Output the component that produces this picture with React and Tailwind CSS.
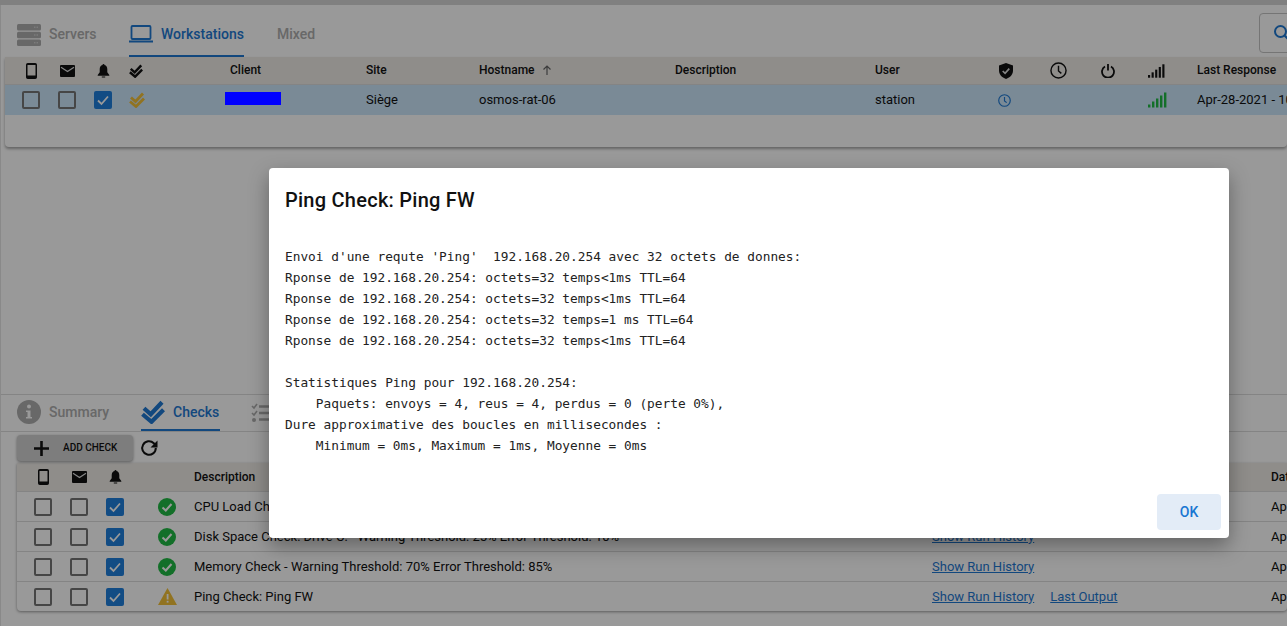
import React from "react";

function Phone() {
  return (
    <svg width="11" height="16" viewBox="0 0 11 16" className="block">
      <path fill="#111" d="M1.800 0h7.400A1.800 1.800 0 0 1 11 1.800v12.400A1.800 1.800 0 0 1 9.200 16H1.800A1.800 1.800 0 0 1 0 14.200V1.800A1.800 1.800 0 0 1 1.800 0zm-.3 2v10.500h8V2z" />
    </svg>
  );
}
function Mail() {
  return (
    <svg width="15" height="12" viewBox="0 0 15 12" className="block">
      <rect width="15" height="12" rx="1" fill="#111" />
      <path d="M1 2.200 7.500 6.500 14 2.200" fill="none" stroke="#ddd" strokeWidth="1.300" />
    </svg>
  );
}
function Bell() {
  return (
    <svg width="13" height="14" viewBox="0 0 13 14" className="block">
      <path fill="#111" d="M6.500 0a1 1 0 0 1 1 1.100C9.400 1.600 10.300 3.400 10.300 5.300v3L12.300 11v.7H.7V11l2-2.700v-3c0-1.900.9-3.700 2.800-4.200A1 1 0 0 1 6.500 0zM4.800 12.500h3.400v1H4.800z" />
    </svg>
  );
}
function Checks({ color = "#111", w = 14, h = 14 }) {
  return (
    <svg width={w} height={h} viewBox="0 0 16 16" className="block">
      <path d="M2 5.500 6.500 9.500 14 1.500" fill="none" stroke={color} strokeWidth="2.800" />
      <path d="M1 9.500 7 14.500 15 6.500" fill="none" stroke={color} strokeWidth="2.800" />
    </svg>
  );
}
function Shield() {
  return (
    <svg width="14" height="16" viewBox="0 0 15 17" className="block">
      <path fill="#111" d="M7.500 0 15 2.500v5.500c0 4.200-3 7.500-7.500 9C3 15.500 0 12.200 0 8V2.500z" />
      <path d="M4 8.500 6.500 11 11 6" fill="none" stroke="#ddd" strokeWidth="1.800" />
    </svg>
  );
}
function Clock({ size = 17, color = "#111", sw = 1.500 }) {
  return (
    <svg width={size} height={size} viewBox="0 0 18 18" className="block">
      <circle cx="9" cy="9" r="8" fill="none" stroke={color} strokeWidth={sw} />
      <path d="M9 4v5.500l3 2.500" fill="none" stroke={color} strokeWidth={sw} />
    </svg>
  );
}
function Power() {
  return (
    <svg width="14" height="14" viewBox="0 0 14 14" className="block">
      <path d="M4 2.500a6 6 0 1 0 6 0" fill="none" stroke="#111" strokeWidth="1.800" />
      <path d="M7 0v6.500" fill="none" stroke="#111" strokeWidth="1.800" />
    </svg>
  );
}
function Signal({ color = "#111", w = 17, h = 14 }) {
  const bars = [3, 6, 9, 12, 15];
  return (
    <svg width={w} height={h} viewBox="0 0 19 15" className="block">
      {bars.map((b, i) => (
        <rect key={i} x={i * 4} y={15 - b} width="2.400" height={b} fill={color} />
      ))}
    </svg>
  );
}
function Box({ on }) {
  return on ? (
    <span className="flex h-[18px] w-[18px] items-center justify-center rounded-[2px] bg-[#1e7fdc]">
      <svg width="14" height="14" viewBox="0 0 14 14"><path d="M2 7.500 5.500 11 12 3.500" fill="none" stroke="#fff" strokeWidth="1.800" /></svg>
    </span>
  ) : (
    <span className="block h-[18px] w-[18px] rounded-[2px] border-2 border-[#757575]" />
  );
}
function Cell({ children, className = "" }) {
  return <div className={`flex h-full min-w-0 items-center whitespace-nowrap ${className}`}>{children}</div>;
}

const top = "grid-cols-[36px_36px_36px_109px_136px_113px_196px_200px_113px_36px_68px_32px_64px_9px_100px]";

const ROWS = [
  ["ok", "CPU Load Check", false],
  ["ok", "Disk Space Check: Drive C: - Warning Threshold: 25% Error Threshold: 10%", false],
  ["ok", "Memory Check - Warning Threshold: 70% Error Threshold: 85%", false],
  ["warn", "Ping Check: Ping FW", true],
];

const OUTPUT = `Envoi d'une requte 'Ping'  192.168.20.254 avec 32 octets de donnes:
Rponse de 192.168.20.254: octets=32 temps<1ms TTL=64
Rponse de 192.168.20.254: octets=32 temps<1ms TTL=64
Rponse de 192.168.20.254: octets=32 temps=1 ms TTL=64
Rponse de 192.168.20.254: octets=32 temps<1ms TTL=64

Statistiques Ping pour 192.168.20.254:
    Paquets: envoys = 4, reus = 4, perdus = 0 (perte 0%),
Dure approximative des boucles en millisecondes :
    Minimum = 0ms, Maximum = 1ms, Moyenne = 0ms`;

const TAB_GREY = "text-[#adadad]";

export default function App() {
  return (
    <div className="relative h-[626px] w-[1287px] overflow-hidden bg-white font-['Roboto',sans-serif] text-[12px] text-[#111]">
      <div className="h-[5px] bg-[#d6d6d6]" />
      <div className="h-[621px] border-l border-[#e4e4e4]">
        <div className="flex h-[348px] flex-col pl-[4px]">
          <div className="flex h-[52px] items-end">
            <div className={`ml-[12px] flex h-[45px] w-[112px] items-center gap-[8px] ${TAB_GREY}`}>
              <svg width="24" height="22" viewBox="0 0 24 22" className="block">
                <rect y="0" width="24" height="6.500" rx="1.500" fill="#adadad" />
                <rect y="7.700" width="24" height="6.500" rx="1.500" fill="#adadad" />
                <rect y="15.500" width="24" height="6.500" rx="1.500" fill="#adadad" />
                <path d="M17 3.200h4M17 11h4M17 18.800h4" stroke="#ddd" strokeWidth="1" strokeDasharray="1.500 1" />
              </svg>
              <span className="text-[14px] font-medium">Servers</span>
            </div>
            <div className="flex h-[45px] w-[115px] shrink-0 items-center gap-[8px] border-b-2 border-[#1e78d2] pt-[1px] text-[#1e78d2]">
              <svg width="24" height="18" viewBox="0 0 24 18" className="block">
                <rect x="2.500" y="1" width="19" height="13" rx="1" fill="none" stroke="#1e78d2" strokeWidth="1.800" />
                <rect y="15.500" width="24" height="2" fill="#1e78d2" />
              </svg>
              <span className="text-[14px] font-medium">Workstations</span>
            </div>
            <div className={`flex h-[45px] items-center pl-[33px] text-[14px] font-medium ${TAB_GREY}`}>Mixed</div>
            <div className="mb-[4px] ml-auto flex h-[40px] w-[40px] translate-x-[12px] items-center rounded-[4px] border border-[#c4c4c4] pl-[13px]">
              <svg width="18" height="18" viewBox="0 0 18 18" className="block"><circle cx="7.500" cy="7.500" r="5.500" fill="none" stroke="#1e78d2" strokeWidth="2" /><path d="m11.500 11.500 5 5" stroke="#1e78d2" strokeWidth="2" /></svg>
            </div>
          </div>

          <div className="h-[90px] shrink-0 rounded-b-[4px] bg-white shadow-[0_2px_3px_rgba(0,0,0,0.35)]">
            <div className={`grid h-[28px] items-center border-b border-[#ddd] bg-[#eeebe7] pl-[8px] font-medium ${top}`}>
              <Cell className="justify-center"><Phone /></Cell>
              <Cell className="justify-center"><Mail /></Cell>
              <Cell className="justify-center"><Bell /></Cell>
              <Cell className="pl-[8px]"><Checks /></Cell>
              <Cell className="pb-[2px]">Client</Cell>
              <Cell className="pb-[2px]">Site</Cell>
              <Cell className="pb-[2px]">Hostname
                <svg width="12" height="12" viewBox="0 0 12 12" className="ml-[6px] block"><path d="M6 11V2M2.500 5.500 6 2l3.500 3.500" fill="none" stroke="#666" strokeWidth="1.200" /></svg>
              </Cell>
              <Cell className="pb-[2px]">Description</Cell>
              <Cell className="pb-[2px]">User</Cell>
              <Cell className="justify-center"><Shield /></Cell>
              <Cell className="justify-center"><Clock /></Cell>
              <Cell className="justify-center"><Power /></Cell>
              <Cell className="justify-center"><Signal /></Cell>
              <Cell />
              <Cell className="pb-[2px]">Last Response</Cell>
            </div>
            <div className={`grid h-[30px] items-center bg-[#cbe6fb] pl-[8px] text-[13px] ${top}`}>
              <Cell className="justify-center"><Box /></Cell>
              <Cell className="justify-center"><Box /></Cell>
              <Cell className="justify-center"><Box on /></Cell>
              <Cell className="pl-[8px]"><Checks color="#f2c037" w={16} h={16} /></Cell>
              <Cell />
              <Cell>Siège</Cell>
              <Cell>osmos-rat-06</Cell>
              <Cell />
              <Cell>station</Cell>
              <Cell className="justify-center pr-[4px]"><Clock size={13} color="#1e78d2" sw={1.600} /></Cell>
              <Cell />
              <Cell />
              <Cell className="justify-center pl-[2px]"><Signal color="#21ba45" w={19} h={16} /></Cell>
              <Cell />
              <Cell>Apr-28-2021 - 10:</Cell>
            </div>
          </div>
        </div>

        <div className="mt-[41px] border-t border-[#ddd]">
          <div className="flex h-[37px] items-stretch border-b border-[#ddd] pl-[16px]">
            <div className={`flex w-[124px] items-center gap-[8px] pb-[2px] ${TAB_GREY}`}>
              <svg width="24" height="24" viewBox="0 0 24 24" className="block"><circle cx="12" cy="12" r="12" fill="#adadad" /><circle cx="12" cy="6.500" r="2" fill="#fff" /><path d="M9 10.500h4.500V17H15v1.500H9V17h1.500v-5H9z" fill="#fff" /></svg>
              <span className="text-[14px] font-medium">Summary</span>
            </div>
            <div className="flex w-[79px] items-center gap-[8px] border-b-2 border-[#1e78d2] text-[#1e78d2]">
              <Checks color="#1e78d2" w={24} h={24} />
              <span className="text-[14px] font-medium">Checks</span>
            </div>
            <div className="ml-[31px] flex items-center">
              <svg width="20" height="20" viewBox="0 0 20 20" className="block"><path d="M1 3l2 2 3-4M1 10l2 2 3-4" fill="none" stroke="#adadad" strokeWidth="1.600" /><circle cx="3" cy="17" r="2" fill="#adadad" /><path d="M8 3.500h12M8 10h12M8 16.500h12" stroke="#adadad" strokeWidth="2.400" /></svg>
            </div>
          </div>

          <div className="flex h-[31px] items-start gap-[7px] pl-[16px] pt-[3px]">
            <div className="flex h-[26px] w-[116px] shrink-0 items-center rounded-[4px] bg-[#d0d0d0] pl-[17px] shadow-[0_1px_3px_rgba(0,0,0,0.4)]">
              <svg width="15" height="15" viewBox="0 0 15 15" className="block"><path d="M6.200 0h2.600v6.200H15v2.600H8.800V15H6.200V8.800H0V6.200h6.200z" fill="#111" /></svg>
              <span className="ml-[14px] pb-[1px] text-[10px] font-medium">ADD CHECK</span>
            </div>
            <svg width="18" height="18" viewBox="0 0 18 18" className="mt-[4px] block shrink-0"><path d="M15.800 9a6.800 6.800 0 1 1-2-4.800L16 6.500" fill="none" stroke="#111" strokeWidth="2" /><path d="M17.500 1.500v7h-7z" fill="#111" /></svg>
          </div>

          <div className="ml-[16px] overflow-hidden rounded-b-[4px] bg-white shadow-[0_1px_3px_rgba(0,0,0,0.4)]">
            <div className="flex h-[29px] items-center border-b border-[#ddd] bg-[#eeebe7] pl-[8px] font-medium">
              <div className="flex w-[36px] shrink-0 justify-center"><Phone /></div>
              <div className="flex w-[36px] shrink-0 justify-center"><Mail /></div>
              <div className="flex w-[36px] shrink-0 justify-center"><Bell /></div>
              <div className="w-[61px] shrink-0" />
              <div className="w-[1077px] shrink-0">Description</div>
              <div className="whitespace-nowrap">Date</div>
            </div>
            {ROWS.map(([state, text, last]) => (
              <div key={text} className="flex h-[30px] items-center border-b border-[#ddd] pl-[8px] text-[13px] last:h-[29px] last:border-b-0">
                <div className="flex w-[36px] shrink-0 justify-center"><Box /></div>
                <div className="flex w-[36px] shrink-0 justify-center"><Box /></div>
                <div className="flex w-[36px] shrink-0 justify-center"><Box on /></div>
                <div className="flex w-[61px] shrink-0 justify-start pl-[25px]">
                  {state === "ok" ? (
                    <svg width="18" height="18" viewBox="0 0 18 18" className="block"><circle cx="9" cy="9" r="9" fill="#21ba45" /><path d="M4.500 9.500 7.800 12.500 13.500 6" fill="none" stroke="#fff" strokeWidth="2" /></svg>
                  ) : (
                    <svg width="19" height="17" viewBox="0 0 19 17" className="block"><path d="M9.500 0 19 17H0z" fill="#f2c037" /><rect x="8.700" y="6" width="1.800" height="5.500" fill="#fff" /><rect x="8.700" y="12.800" width="1.800" height="1.800" fill="#fff" /></svg>
                  )}
                </div>
                <div className="w-[738px] shrink-0 whitespace-nowrap">{text}</div>
                <div className="flex w-[339px] shrink-0 gap-[16px] whitespace-nowrap text-[#1e78d2] underline">
                  <span>Show Run History</span>
                  {last && <span>Last Output</span>}
                </div>
                <div className="whitespace-nowrap">Apr-28-2021</div>
              </div>
            ))}
          </div>
        </div>
      </div>

      <div className="absolute inset-0 bg-black/40" />
      <div className="absolute left-[225px] top-[92px] h-[13px] w-[56px] bg-[#0000ff]" />

      <div className="absolute left-[269px] top-[168px] flex h-[370px] w-[960px] flex-col rounded-[4px] bg-white shadow-[0_8px_20px_rgba(0,0,0,0.35)]">
        <div className="px-[16px] pt-[20px] text-[20px] font-medium leading-[24px] tracking-[0.25px] text-[#111]">Ping Check: Ping FW</div>
        <pre className="mt-[34px] px-[16px] font-['DejaVu_Sans_Mono',monospace] text-[12.800px] leading-[21px] text-[#222]">{OUTPUT}</pre>
        <div className="mt-auto flex justify-end p-[8px]">
          <div className="flex h-[36px] w-[64px] items-center justify-center rounded-[4px] bg-[#e3ecf7] text-[14px] font-medium text-[#1976d2]">OK</div>
        </div>
      </div>
    </div>
  );
}
